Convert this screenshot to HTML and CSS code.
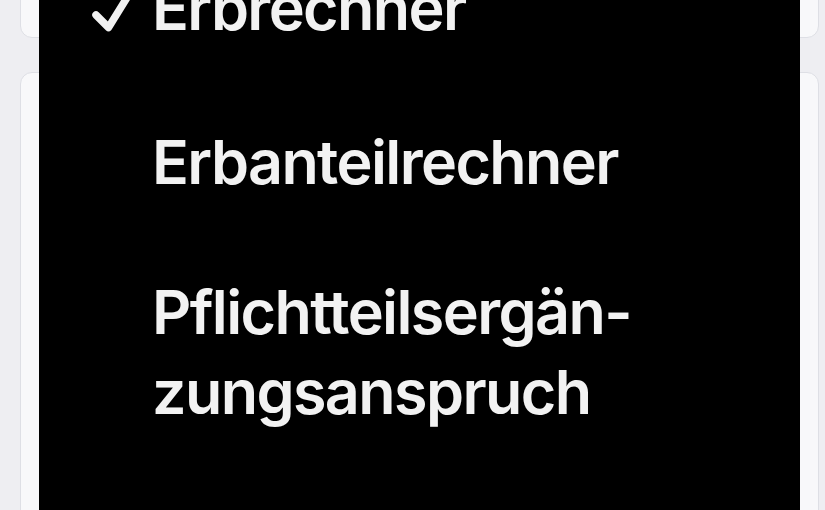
FILE: index.html
```html
<!DOCTYPE html>
<html lang="de">
<head>
<meta charset="utf-8">
<title>Rechner</title>
<link rel="stylesheet" href="styles.css">
</head>
<body>
<div class="page">
  <div class="card card-top"></div>
  <div class="card card-main"></div>
</div>
<div class="menu" role="menu">
  <div class="item item-first" role="menuitemradio" aria-checked="true">
    <span class="check">
      <svg width="40" height="40" viewBox="0 0 40 40" aria-hidden="true">
        <polyline points="5,23 17.5,35.5 37,4" fill="none" stroke="#f2f2f2" stroke-width="7.5" stroke-linecap="round" stroke-linejoin="round"/>
      </svg>
    </span>
    <span class="label">Erbrechner</span>
  </div>
  <div class="item" role="menuitemradio" aria-checked="false">
    <span class="check"></span>
    <span class="label">Erbanteilrechner</span>
  </div>
  <div class="item" role="menuitemradio" aria-checked="false">
    <span class="check"></span>
    <span class="label">Pflichtteilsergän-<br>zungsanspruch</span>
  </div>
</div>
</body>
</html>
```
FILE: styles.css
```css
html, body {
  margin: 0;
  padding: 0;
}
body {
  width: 825px;
  height: 510px;
  overflow: hidden;
  background: #eeeef2;
  font-family: Inter, "Noto Sans", "Liberation Sans", sans-serif;
  position: relative;
}
.page {
  display: flex;
  flex-direction: column;
  gap: 34px;
  padding: 0 6px 0 20px;
  margin-top: -30px;
}
.card {
  background: #f8f8fa;
  border: 1px solid #dedfe5;
  border-radius: 12px;
}
.card-top {
  height: 66px;
}
.card-main {
  height: 600px;
}
.menu {
  position: absolute;
  left: 39px;
  top: -67.5px;
  width: 761px;
  height: 700px;
  background: #000;
  color: #f2f2f2;
}
.item {
  display: flex;
  align-items: flex-start;
  padding: 35px 0 35px 52px;
}
.item-first {
  padding-bottom: 39px;
}
.check {
  flex: 0 0 61px;
  height: 80px;
}
.check svg {
  display: block;
  margin-top: 24px;
}
.label {
  font-size: 61px;
  font-weight: 600;
  line-height: 80px;
  letter-spacing: -1.6px;
}
```
